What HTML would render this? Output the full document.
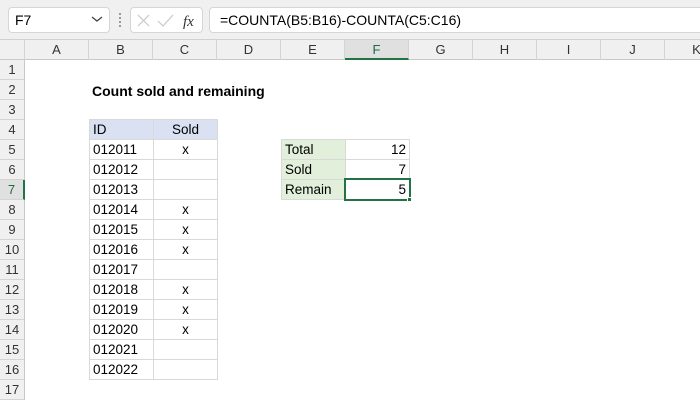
<!DOCTYPE html>
<html><head><meta charset="utf-8"><style>
*{margin:0;padding:0;box-sizing:border-box}
body{width:700px;height:400px;overflow:hidden;background:#fff;font-family:"Liberation Sans",Arial,sans-serif;position:relative;color:#000}
.a{position:absolute}
.top{left:0;top:0;width:700px;height:40px;background:#f0f0f0;border-bottom:1px solid #d0d0d0}
.box{background:#fff;border:1px solid #d6d6d6;border-radius:4px}
.ch{top:40px;height:20px;background:#f0f0f0;border-right:1px solid #d4d4d4;border-bottom:1px solid #c8c8c8;font-size:13px;color:#333;text-align:center;line-height:19px}
.rh{left:0;width:25px;height:20px;background:#f0f0f0;border-right:1px solid #c8c8c8;border-bottom:1px solid #d4d4d4;font-size:13px;color:#333;text-align:center;line-height:20px}
.c{height:20px;font-size:13.5px;line-height:20px;padding:0 3px;border:1px solid #d9d9d9;white-space:nowrap}
</style></head><body>
<div class="a top"></div>
<div class="a box" style="left:8px;top:7px;width:102px;height:26px"></div>
<div class="a" style="left:15px;top:12px;font-size:14px">F7</div>
<svg class="a" style="left:91px;top:15px" width="12" height="8"><path d="M1 2 L6 6 L11 2" stroke="#444" stroke-width="1.3" fill="none"/></svg>
<div class="a" style="left:119px;top:13px;width:2px;height:14px;border-left:2px dotted #999"></div>
<div class="a box" style="left:130px;top:7px;width:73px;height:26px"></div>
<svg class="a" style="left:136px;top:12px" width="60" height="18"><path d="M2 3 L13 14 M13 3 L2 14" stroke="#c8c8c8" stroke-width="1.2"/><path d="M22 9 L27 14 L37 3" stroke="#c8c8c8" stroke-width="1.2" fill="none"/><text x="47" y="14" font-family="Liberation Serif" font-style="italic" font-size="15" fill="#333">fx</text></svg>
<div class="a box" style="left:209px;top:7px;width:500px;height:26px"></div>
<div class="a" style="left:220px;top:12px;font-size:14px">=COUNTA(B5:B16)-COUNTA(C5:C16)</div>

<div class="a ch" style="left:0;width:25px"></div>
<div class="a ch" style="left:25px;width:64px">A</div>
<div class="a ch" style="left:89px;width:64px">B</div>
<div class="a ch" style="left:153px;width:64px">C</div>
<div class="a ch" style="left:217px;width:64px">D</div>
<div class="a ch" style="left:281px;width:64px">E</div>
<div class="a ch" style="left:345px;width:64px;background:#e0e0e0;border-bottom:2px solid #217346;color:#1e6b40">F</div>
<div class="a ch" style="left:409px;width:64px">G</div>
<div class="a ch" style="left:473px;width:64px">H</div>
<div class="a ch" style="left:537px;width:64px">I</div>
<div class="a ch" style="left:601px;width:64px">J</div>
<div class="a ch" style="left:665px;width:64px">K</div>

<div class="a rh" style="top:60px">1</div>
<div class="a rh" style="top:80px">2</div>
<div class="a rh" style="top:100px">3</div>
<div class="a rh" style="top:120px">4</div>
<div class="a rh" style="top:140px">5</div>
<div class="a rh" style="top:160px">6</div>
<div class="a rh" style="top:180px;background:#e0e0e0;border-right:2px solid #217346;color:#1e6b40">7</div>
<div class="a rh" style="top:200px">8</div>
<div class="a rh" style="top:220px">9</div>
<div class="a rh" style="top:240px">10</div>
<div class="a rh" style="top:260px">11</div>
<div class="a rh" style="top:280px">12</div>
<div class="a rh" style="top:300px">13</div>
<div class="a rh" style="top:320px">14</div>
<div class="a rh" style="top:340px">15</div>
<div class="a rh" style="top:360px">16</div>
<div class="a rh" style="top:380px">17</div>

<div class="a" style="left:92px;top:81px;font-size:14px;font-weight:bold;line-height:20px">Count sold and remaining</div>

<div class="a c" style="left:89px;top:119px;width:65px;height:21px;background:#d9e1f2">ID</div>
<div class="a c" style="left:153px;top:119px;width:65px;height:21px;background:#d9e1f2;text-align:center">Sold</div>

<div class="a c" style="left:89px;top:139px;width:65px;height:21px">012011</div><div class="a c" style="left:153px;top:139px;width:65px;height:21px;text-align:center">x</div>
<div class="a c" style="left:89px;top:159px;width:65px;height:21px">012012</div><div class="a c" style="left:153px;top:159px;width:65px;height:21px"></div>
<div class="a c" style="left:89px;top:179px;width:65px;height:21px">012013</div><div class="a c" style="left:153px;top:179px;width:65px;height:21px"></div>
<div class="a c" style="left:89px;top:199px;width:65px;height:21px">012014</div><div class="a c" style="left:153px;top:199px;width:65px;height:21px;text-align:center">x</div>
<div class="a c" style="left:89px;top:219px;width:65px;height:21px">012015</div><div class="a c" style="left:153px;top:219px;width:65px;height:21px;text-align:center">x</div>
<div class="a c" style="left:89px;top:239px;width:65px;height:21px">012016</div><div class="a c" style="left:153px;top:239px;width:65px;height:21px;text-align:center">x</div>
<div class="a c" style="left:89px;top:259px;width:65px;height:21px">012017</div><div class="a c" style="left:153px;top:259px;width:65px;height:21px"></div>
<div class="a c" style="left:89px;top:279px;width:65px;height:21px">012018</div><div class="a c" style="left:153px;top:279px;width:65px;height:21px;text-align:center">x</div>
<div class="a c" style="left:89px;top:299px;width:65px;height:21px">012019</div><div class="a c" style="left:153px;top:299px;width:65px;height:21px;text-align:center">x</div>
<div class="a c" style="left:89px;top:319px;width:65px;height:21px">012020</div><div class="a c" style="left:153px;top:319px;width:65px;height:21px;text-align:center">x</div>
<div class="a c" style="left:89px;top:339px;width:65px;height:21px">012021</div><div class="a c" style="left:153px;top:339px;width:65px;height:21px"></div>
<div class="a c" style="left:89px;top:359px;width:65px;height:21px">012022</div><div class="a c" style="left:153px;top:359px;width:65px;height:21px"></div>

<div class="a c" style="left:281px;top:139px;width:65px;height:21px;background:#e2efda">Total</div><div class="a c" style="left:345px;top:139px;width:65px;height:21px;text-align:right">12</div>
<div class="a c" style="left:281px;top:159px;width:65px;height:21px;background:#e2efda">Sold</div><div class="a c" style="left:345px;top:159px;width:65px;height:21px;text-align:right">7</div>
<div class="a c" style="left:281px;top:179px;width:65px;height:21px;background:#e2efda">Remain</div><div class="a c" style="left:345px;top:179px;width:65px;height:21px;text-align:right">5</div>
<div class="a" style="left:344px;top:178px;width:67px;height:23px;border:2px solid #217346"></div>
<div class="a" style="left:407px;top:197px;width:5px;height:5px;background:#217346;border:1px solid #fff"></div>
</body></html>
